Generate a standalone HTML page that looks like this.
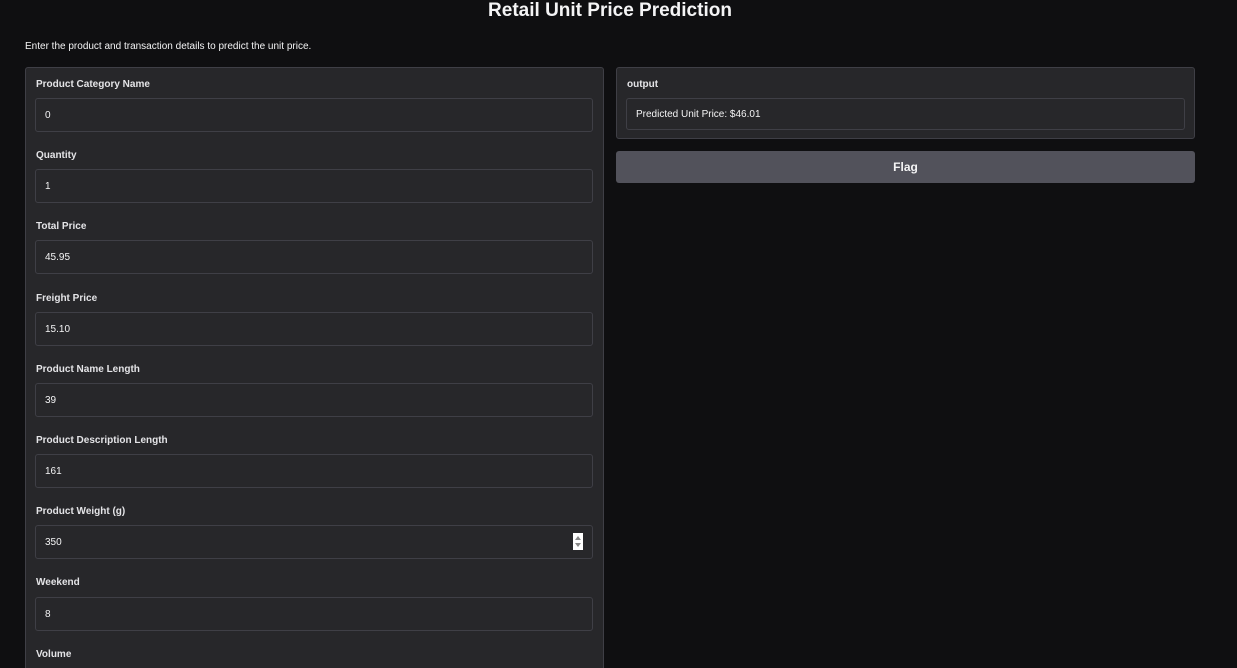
<!DOCTYPE html>
<html><head><style>
*{box-sizing:border-box;margin:0;padding:0}
html,body{width:1237px;height:668px;overflow:hidden}
body{background:#0f0f11;font-family:"Liberation Sans",sans-serif;color:#f4f4f5;position:relative}
.t{position:absolute;top:0;left:0;width:1220px;text-align:center;font-size:19px;font-weight:bold;line-height:22px}
.sub{position:absolute;left:25px;top:41px;font-size:10px}
.panel{position:absolute;background:#27272a;border:1px solid #3f3f46;border-radius:3px}
.lab{position:absolute;left:10px;font-size:10px;font-weight:bold;color:#e4e4e7}
.inp{position:absolute;left:9px;width:558px;height:34px;border:1px solid #3f3f46;border-radius:3px;background:#27272a;font-size:10px;padding:0 0 0 9px;line-height:33px}
.spin{position:absolute;right:9px;top:7px;width:10px;height:17px;background:#fff}
.spin:before{content:"";position:absolute;left:2px;top:3px;border:3px solid transparent;border-bottom:4px solid #888;border-top:0}
.spin:after{content:"";position:absolute;left:2px;top:10px;border:3px solid transparent;border-top:4px solid #888;border-bottom:0}
.btn{position:absolute;left:616px;top:151px;width:579px;height:32px;background:#52525b;border-radius:3px;text-align:center;line-height:33px;font-size:12px;font-weight:bold}
</style></head><body>
<div class="t">Retail Unit Price Prediction</div>
<div class="sub">Enter the product and transaction details to predict the unit price.</div>
<div class="panel" style="left:25px;top:67px;width:579px;height:620px">
<div class="lab" style="top:11px">Product Category Name</div><div class="inp" style="top:30px">0</div>
<div class="lab" style="top:82px">Quantity</div><div class="inp" style="top:101px">1</div>
<div class="lab" style="top:153px">Total Price</div><div class="inp" style="top:172px">45.95</div>
<div class="lab" style="top:225px">Freight Price</div><div class="inp" style="top:244px">15.10</div>
<div class="lab" style="top:296px">Product Name Length</div><div class="inp" style="top:315px">39</div>
<div class="lab" style="top:367px">Product Description Length</div><div class="inp" style="top:386px">161</div>
<div class="lab" style="top:438px">Product Weight (g)</div><div class="inp" style="top:457px">350<div class="spin"></div></div>
<div class="lab" style="top:509px">Weekend</div><div class="inp" style="top:529px">8</div>
<div class="lab" style="top:581px">Volume</div>
</div>
<div class="panel" style="left:616px;top:67px;width:579px;height:72px">
<div class="lab" style="top:11px">output</div>
<div class="inp" style="top:30px;width:559px;height:32px;line-height:31px">Predicted Unit Price: $46.01</div>
</div>
<div class="btn">Flag</div>
</body></html>
